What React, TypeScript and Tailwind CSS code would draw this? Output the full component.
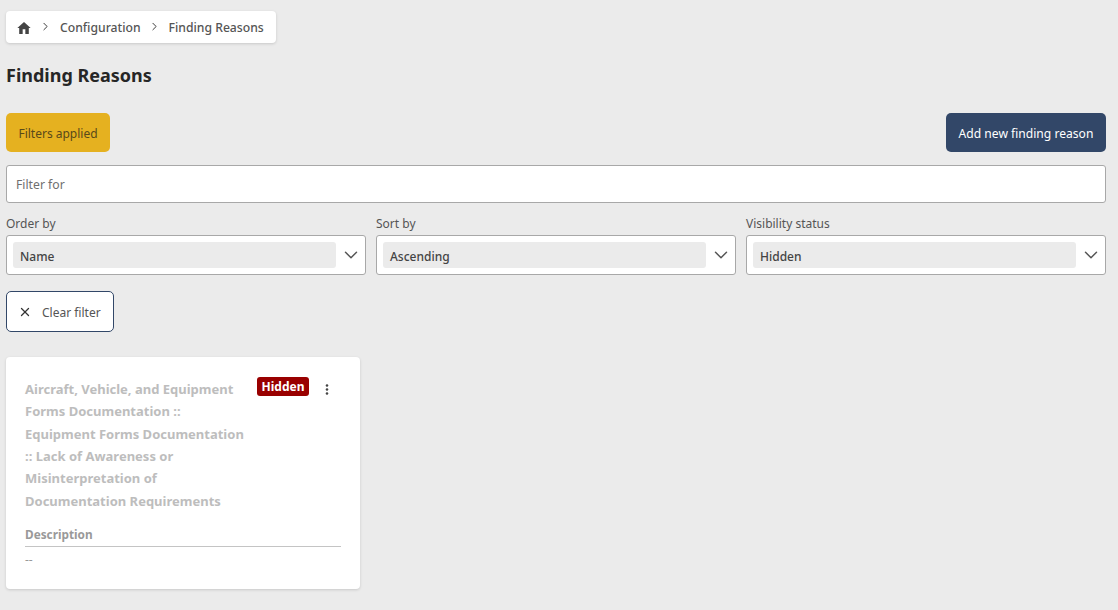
import React from "react";
import { ChevronDown, ChevronRight, X } from "lucide-react";

const font = "font-['Noto_Sans','Open_Sans',sans-serif]";

const HomeIcon = () => (
  <svg viewBox="0 0 24 24" className="w-[16px] h-[16px]" fill="#444444">
    <path d="M10 21v-7h4v7h5.2v-9H22L12 3 2 12h2.8v9z" />
  </svg>
);

const FilterSelect = ({ label, value }: { label: string; value: string }) => (
  <div className="flex-1 min-w-0">
    <div className="text-[12px] leading-[17px] text-[#555555] mb-[3px]">{label}</div>
    <div className="h-[40px] bg-white border border-[#a8a8a8] rounded-[3px] flex items-center pl-[6px] pr-[3px]">
      <div className="flex-1 h-[26px] bg-[#ebebeb] rounded-[3px] flex items-center px-[7px] pt-[3px] text-[12px] font-medium text-[#444444]">
        {value}
      </div>
      <ChevronDown className="w-[22px] h-[22px] ml-[4px] text-[#555555]" strokeWidth={1.6} />
    </div>
  </div>
);

const App: React.FC = () => {
  return (
    <div className={`${font} w-[1118px] h-[610px] overflow-hidden bg-[#ebebeb] pl-[6px] pr-[12px] pt-[11px]`}>
      <nav className="w-[270px] h-[32px] bg-white rounded-[4px] shadow-[0_1px_3px_rgba(0,0,0,0.15)] flex items-center pl-[10px] pt-[2px] text-[12.2px] font-medium text-[#555555]">
        <HomeIcon />
        <ChevronRight className="w-[13px] h-[13px] ml-[7px] mb-[4px] text-[#333333]" strokeWidth={1.75} />
        <span className="ml-[8px]">Configuration</span>
        <ChevronRight className="w-[13px] h-[13px] ml-[7px] mb-[4px] text-[#333333]" strokeWidth={1.75} />
        <span className="ml-[8px]">Finding Reasons</span>
      </nav>

      <h1 className="mt-[19px] text-[18px] leading-[26px] font-bold text-[#262626]">Finding Reasons</h1>

      <div className="mt-[25px] flex justify-between items-start">
        <button className="w-[104px] h-[39px] pt-[2px] bg-[#e5b120] rounded-[5px] text-[12px] text-[#59491a]">
          Filters applied
        </button>
        <button className="w-[160px] h-[39px] pt-[3px] bg-[#324768] rounded-[5px] text-[12.1px] text-white">
          Add new finding reason
        </button>
      </div>

      <div className="mt-[13px] h-[38px] bg-white border border-[#a8a8a8] rounded-[3px] flex items-center pl-[9px] pt-[2px] text-[12.2px] text-[#6f6f6f]">
        Filter for
      </div>

      <div className="mt-[12px] flex gap-[10px]">
        <FilterSelect label="Order by" value="Name" />
        <FilterSelect label="Sort by" value="Ascending" />
        <FilterSelect label="Visibility status" value="Hidden" />
      </div>

      <button className="mt-[16px] w-[108px] h-[41px] bg-white border border-[#324768] rounded-[5px] flex items-center pl-[11px] text-[12px] text-[#555555]">
        <X className="w-[14px] h-[14px] text-[#333333]" strokeWidth={2.25} />
        <span className="ml-[10px] pt-[2px]">Clear filter</span>
      </button>

      <div className="mt-[25px] w-[354px] h-[232px] bg-white rounded-[4px] shadow-[0_1px_3px_rgba(0,0,0,0.15)] pt-[20.8px] px-[19px]">
        <div className="flex items-start">
          <div className="w-[224px] text-[13px] leading-[22.4px] font-bold text-[#bdbdbd]">
            Aircraft, Vehicle, and Equipment Forms Documentation :: Equipment Forms Documentation :: Lack of Awareness or Misinterpretation of Documentation Requirements
          </div>
          <span className="ml-[8px] mt-[-1px] h-[19px] w-[52px] pt-[1px] bg-[#990000] rounded-[3px] flex items-center justify-center text-[12px] font-bold text-white">
            Hidden
          </span>
          <svg viewBox="0 0 4 14" className="ml-[16px] mt-[6px] w-[4px] h-[11px]" fill="#444444">
            <circle cx="2" cy="2" r="1.6" />
            <circle cx="2" cy="7" r="1.6" />
            <circle cx="2" cy="12" r="1.6" />
          </svg>
        </div>
        <div className="mt-[13px] pb-[3px] pt-[1px] border-b border-[#c4c4c4] text-[11.8px] leading-[17px] font-bold text-[#999999]">
          Description
        </div>
        <div className="mt-[4px] text-[12px] leading-[18px] text-[#999999]">--</div>
      </div>
    </div>
  );
};

export default App;
